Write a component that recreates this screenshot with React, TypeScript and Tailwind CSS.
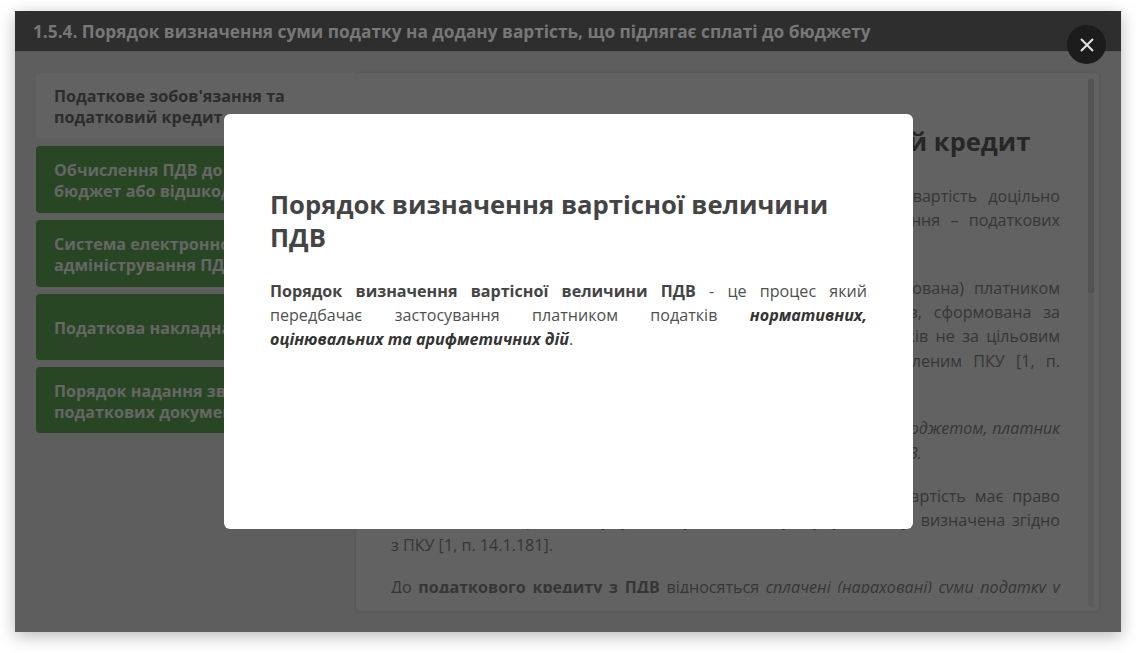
const font = "font-['Open_Sans',sans-serif]";

function JustLine({ children }: { children: React.ReactNode }) {
  return <span className="block whitespace-nowrap text-justify [text-align-last:justify]">{children}</span>;
}

const topics = [
  { lines: ["Обчислення ПДВ до сплати в", "бюджет або відшкодування"], h: "h-[67px]" },
  { lines: ["Система електронного", "адміністрування ПДВ"], h: "h-[67px]" },
  { lines: ["Податкова накладна"], h: "h-[66px]" },
  { lines: ["Порядок надання звітних", "податкових документів"], h: "h-[66px]" },
];

export default function App() {
  return (
    <div className={`${font} h-[653px] w-[1136px] overflow-hidden bg-white pl-[15px] pt-[11px]`}>
      <div className="relative flex h-[621px] w-[1106px] flex-col bg-[#5e5e5e] shadow-[0_4px_16px_rgba(0,0,0,0.28)]">
        <header className="flex h-[41px] items-center border-b border-[#555] bg-[#2e2e2e] pl-[18px] pt-[2px]">
          <h1 className="text-[17.25px] font-bold text-[#777]">
            1.5.4. Порядок визначення суми податку на додану вартість, що підлягає сплаті до бюджету
          </h1>
        </header>

        <div className="flex flex-1 gap-[16px] pl-[21px] pt-[21px]">
          <nav className="flex w-[304px] flex-col gap-[7px]">
            <div className="relative z-10 -mr-[16px] mb-px flex h-[65px] items-center rounded-l-[4px] bg-[#626262] px-[18px] pt-[3px] text-[16.15px] leading-[21px] font-bold text-[#2c2c2c]">
              <span>
                Податкове зобов'язання та
                <br />
                податковий кредит
              </span>
            </div>
            {topics.map((t) => (
              <div
                key={t.lines[0]}
                className={`flex ${t.h} items-center rounded-[4px] bg-[#294624] px-[18px] pt-[3px] text-[16.15px] leading-[21px] font-bold text-[#666]`}
              >
                <span>
                  {t.lines.map((l) => (
                    <span key={l} className="block whitespace-nowrap">
                      {l}
                    </span>
                  ))}
                </span>
              </div>
            ))}
          </nav>

          <main className="relative h-[538px] w-[743px] rounded-[4px] bg-[#626262] text-[16.1px] leading-[24.3px] text-[#363636] shadow-[0_0_3px_rgba(0,0,0,0.14)]">
            <div className="h-[520px] overflow-hidden pl-[35px] pr-[39px]">
              <h2 className="mt-[50px] pr-[28px] text-center text-[25.5px] leading-[36px] font-bold text-[#272727]">
                Податкове зобов'язання та податковий кредит
              </h2>
              <p className="mt-[25px]">
                <JustLine>Вивчення цієї теми про зобов'язання з податку на додану вартість доцільно</JustLine>
                <JustLine>почати з вивчення та засвоєння основних понять і визначення – податкових</JustLine>
                <span className="block">зобов'язань.</span>
              </p>
              <p className="mt-[19px]">
                <JustLine>Податкове зобов'язання – це вся сума, нарахована (задекларована) платником</JustLine>
                <JustLine>податку при постачанні товарів та послуг, податків і зборів, сформована за</JustLine>
                <JustLine>операціями щодо використання товарів, послуг і сплати податків не за цільовим</JustLine>
                <JustLine>призначенням, а також у тих випадках та порядку, встановленим ПКУ [1, п.</JustLine>
                <span className="block">14.1.178].</span>
              </p>
              <p className="mt-[19px] italic">
                <JustLine>Якщо сума податкових зобов'язань перевищує суму розрахунків з бюджетом, платник</JustLine>
                <span className="block">перераховує в бюджет всю різницю між ними у вигляді податку ПДВ.</span>
              </p>
              <p className="mt-[19px]">
                <JustLine>Згідно із законодавством кожен платник податку на додану вартість має право</JustLine>
                <JustLine>на податковий кредит – суму, на яку він зменшує суму податку, визначена згідно</JustLine>
                <span className="block">з ПКУ [1, п. 14.1.181].</span>
              </p>
              <p className="mt-[18px]">
                <JustLine>
                  До <b>податкового кредиту з ПДВ</b> відносяться <i>сплачені (нараховані) суми податку у</i>
                </JustLine>
              </p>
            </div>
            <div className="absolute top-[6px] right-[5px] h-[528px] w-[6px] rounded-full bg-[#5c5c5c]">
              <div className="h-[214px] rounded-full bg-[#525252]" />
            </div>
          </main>
        </div>

        <section className="absolute top-[103px] left-[209px] z-20 h-[415px] w-[689px] rounded-[6px] bg-white px-[46px] pt-[74px] text-[#505050]">
          <h2 className="text-[25.65px] leading-[33px] font-bold text-[#444]">
            Порядок визначення вартісної величини ПДВ
          </h2>
          <p className="mt-[25px] text-justify text-[16.1px] leading-[24px]">
            <b className="text-[#444]">Порядок визначення вартісної величини ПДВ</b> - це процес який передбачає застосування платником
            податків{" "}
            <b className="italic text-[#333]">нормативних, оцінювальних та арифметичних дій</b>.
          </p>
        </section>

        <button
          type="button"
          aria-label="Закрити"
          className="absolute top-[14px] right-[15px] z-20 flex h-[39px] w-[39px] items-center justify-center rounded-full bg-[#1c1c1c]"
        >
          <svg width="16" height="16" viewBox="0 0 16 16" fill="none" stroke="#e4e4e4" strokeWidth="2">
            <path d="M2 2 14 14M14 2 2 14" />
          </svg>
        </button>
      </div>
    </div>
  );
}
